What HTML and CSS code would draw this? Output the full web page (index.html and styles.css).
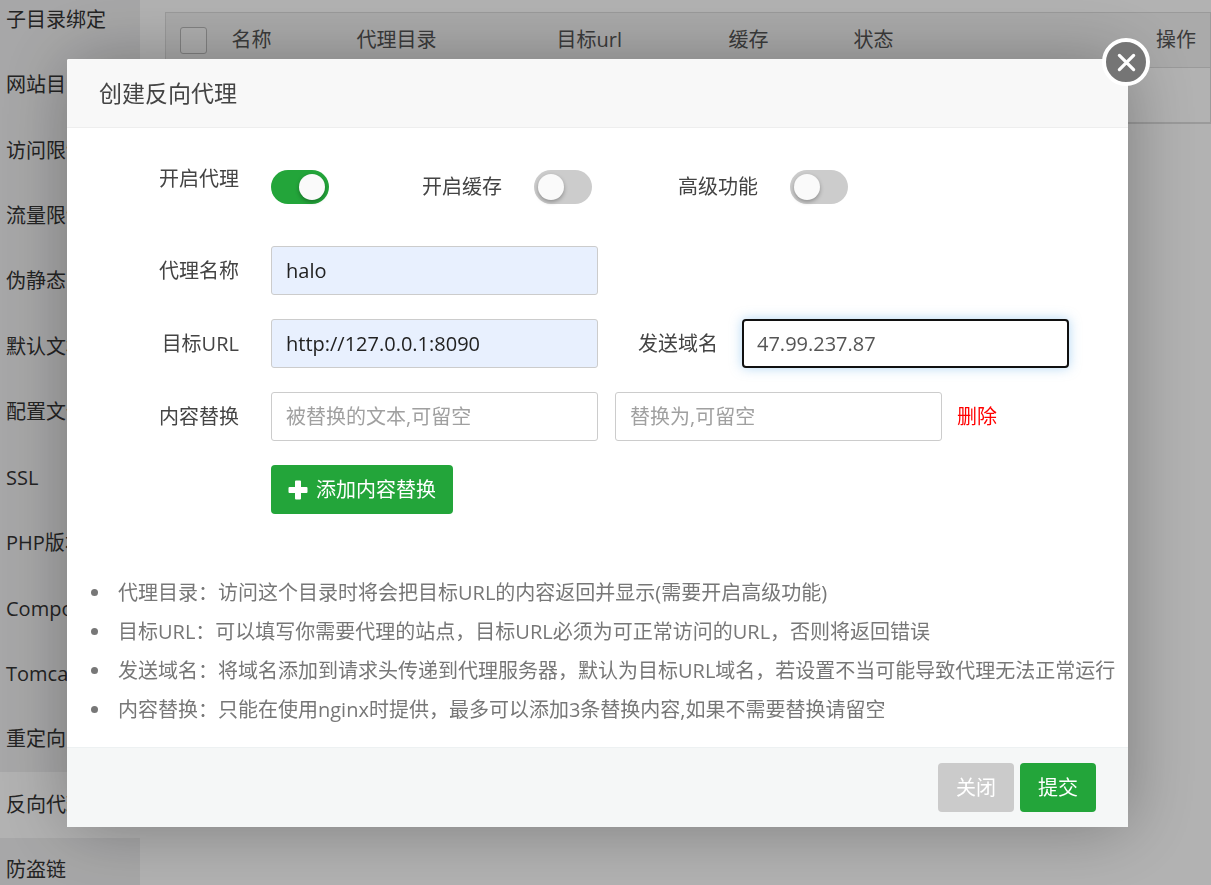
FILE: index.html
```html
<!DOCTYPE html>
<html lang="zh-CN">
<head>
<meta charset="utf-8">
<title>创建反向代理</title>
<link rel="stylesheet" href="styles.css">
</head>
<body>
<div class="page">
  <nav class="sidebar">
    <a class="side-item" href="#">子目录绑定</a>
    <a class="side-item" href="#">网站目录</a>
    <a class="side-item" href="#">访问限制</a>
    <a class="side-item" href="#">流量限制</a>
    <a class="side-item" href="#">伪静态</a>
    <a class="side-item" href="#">默认文档</a>
    <a class="side-item" href="#">配置文件</a>
    <a class="side-item" href="#">SSL</a>
    <a class="side-item" href="#">PHP版本</a>
    <a class="side-item" href="#">Composer</a>
    <a class="side-item" href="#">Tomcat</a>
    <a class="side-item" href="#">重定向</a>
    <a class="side-item active" href="#">反向代理</a>
    <a class="side-item" href="#">防盗链</a>
  </nav>
  <main class="content">
    <table class="proxy-table">
      <thead>
        <tr>
          <th class="col-check"><input class="check" type="checkbox" aria-label="全选"></th>
          <th class="col-name">名称</th>
          <th class="col-dir">代理目录</th>
          <th class="col-url">目标url</th>
          <th class="col-cache">缓存</th>
          <th class="col-state">状态</th>
          <th class="col-action">操作</th>
        </tr>
      </thead>
      <tbody>
        <tr><td colspan="7"></td></tr>
      </tbody>
    </table>
  </main>
</div>

<div class="overlay">
  <section class="modal" role="dialog" aria-labelledby="dialog-title">
    <button class="close" type="button" aria-label="关闭窗口">
      <svg class="close-icon" viewBox="0 0 20 20"><path d="M2.500 2.500 17.500 17.500M17.500 2.500 2.500 17.500" fill="none" stroke="#fff" stroke-width="3.400" stroke-linecap="round"/></svg>
    </button>
    <header class="modal-head"><h1 class="modal-title" id="dialog-title">创建反向代理</h1></header>
    <form class="modal-body">
      <div class="row row-switches">
        <label class="label label-top" for="proxy-on">开启代理</label>
        <input class="switch" id="proxy-on" type="checkbox" checked>
        <div class="switch-group">
          <label for="cache-on">开启缓存</label>
          <input class="switch" id="cache-on" type="checkbox">
        </div>
        <div class="switch-group">
          <label for="advanced-on">高级功能</label>
          <input class="switch" id="advanced-on" type="checkbox">
        </div>
      </div>
      <div class="fields">
        <div class="row">
          <label class="label" for="name">代理名称</label>
          <input class="text filled" id="name" type="text" value="halo">
        </div>
        <div class="row">
          <label class="label" for="url">目标URL</label>
          <input class="text filled" id="url" type="text" value="http://127.0.0.1:8090">
          <label class="label-domain" for="domain">发送域名</label>
          <input class="text focused" id="domain" type="text" value="47.99.237.87">
        </div>
        <div class="row">
          <label class="label" for="from">内容替换</label>
          <input class="text" id="from" type="text" placeholder="被替换的文本,可留空">
          <input class="text text-to" type="text" placeholder="替换为,可留空" aria-label="替换为">
          <a class="remove" href="#">删除</a>
        </div>
        <div class="row row-add">
          <button class="btn btn-green btn-add" type="button">
            <svg class="plus-icon" viewBox="0 0 20 20"><path d="M8 0.500h4q1 0 1 1V7h5.500q1 0 1 1v4q0 1-1 1H13v5.500q0 1-1 1H8q-1 0-1-1V13H1.500q-1 0-1-1V8q0-1 1-1H7V1.500q0-1 1-1z" fill="#fff"/></svg>
            添加内容替换
          </button>
        </div>
      </div>
      <ul class="notes">
        <li class="note">代理目录：访问这个目录时将会把目标URL的内容返回并显示(需要开启高级功能)</li>
        <li class="note">目标URL：可以填写你需要代理的站点，目标URL必须为可正常访问的URL，否则将返回错误</li>
        <li class="note">发送域名：将域名添加到请求头传递到代理服务器，默认为目标URL域名，若设置不当可能导致代理无法正常运行</li>
        <li class="note">内容替换：只能在使用nginx时提供，最多可以添加3条替换内容,如果不需要替换请留空</li>
      </ul>
    </form>
    <footer class="modal-foot">
      <button class="btn btn-grey" type="button">关闭</button>
      <button class="btn btn-green" type="button">提交</button>
    </footer>
  </section>
</div>
</body>
</html>
```

FILE: styles.css
```css
* {
  box-sizing: border-box;
}

body {
  margin: 0;
  height: 100vh;
  overflow: hidden;
  background: #fff;
  color: #444;
  font-family: "Open Sans", "Noto Sans CJK SC", sans-serif;
  font-size: 20px;
  line-height: 28px;
}

input,
button {
  font: inherit;
  margin: 0;
}

.page {
  display: flex;
  height: 100vh;
  overflow: hidden;
}

.sidebar {
  flex: none;
  width: 140px;
  height: calc(100vh + 31px);
  margin-top: -13px;
  display: grid;
  grid-template-rows: repeat(14, 1fr);
  background: #f0f0f1;
}

.side-item {
  display: flex;
  align-items: center;
  padding-left: 6px;
  color: #333;
  text-decoration: none;
  white-space: nowrap;
}

.side-item.active {
  background: #fff;
}

.content {
  flex: 1;
  padding: 12px 0 0 25px;
}

.proxy-table {
  width: 100%;
  table-layout: fixed;
  border-collapse: collapse;
  border: 1px solid #ddd;
  border-bottom: 2px solid #ddd;
}

.proxy-table th {
  height: 55px;
  padding: 0 14px;
  background: #f4f4f4;
  border-bottom: 1px solid #ddd;
  color: #555;
  font-weight: 400;
  text-align: left;
  white-space: nowrap;
}

.proxy-table td {
  height: 55px;
}

.proxy-table .col-action {
  text-align: right;
}

.col-check { width: 52px; }
.col-name { width: 125px; }
.col-dir { width: 200px; }
.col-url { width: 172px; }
.col-cache { width: 125px; }
.col-state { width: 125px; }

.check {
  appearance: none;
  display: block;
  width: 27px;
  height: 27px;
  border: 1px solid #bbb;
  border-radius: 3px;
  background: #fafafa;
}

.overlay {
  position: fixed;
  inset: 0;
  display: flex;
  align-items: flex-start;
  padding: 59px 83px 0 67px;
  background: rgba(0, 0, 0, 0.3);
}

.modal {
  position: relative;
  flex: 1;
  min-width: 0;
  background: #fff;
  border-radius: 2px;
  box-shadow: 1px 1px 70px rgba(0, 0, 0, 0.3);
}

.close {
  position: absolute;
  top: -21px;
  right: -22px;
  width: 48px;
  height: 48px;
  padding: 0;
  display: flex;
  align-items: center;
  justify-content: center;
  border: 4px solid #fff;
  border-radius: 50%;
  background: #757575;
}

.close-icon {
  width: 19px;
  height: 19px;
}

.modal-head {
  padding: 17px 32px;
  background: #f8f8f8;
  border-bottom: 1px solid #eee;
  border-radius: 2px 2px 0 0;
}

.modal-title {
  margin: 0;
  font-size: 23px;
  font-weight: 400;
  line-height: 34px;
}

.modal-body {
  padding: 42px 0 18px;
}

.row {
  display: flex;
  align-items: center;
}

.row-switches {
  margin-bottom: 42px;
}

.fields {
  display: flex;
  flex-direction: column;
  gap: 24px;
}

.label {
  flex: none;
  width: 172px;
  margin-right: 32px;
  text-align: right;
}

.label-top {
  align-self: flex-start;
  line-height: 18px;
}

.switch {
  appearance: none;
  display: block;
  flex: none;
  width: 58px;
  height: 34px;
  padding: 4px;
  border-radius: 17px;
  background: #ccc;
}

.switch::before {
  content: "";
  display: block;
  width: 26px;
  height: 26px;
  border-radius: 50%;
  background: #fafafa;
  box-shadow: 0 2px 4px rgba(0, 0, 0, 0.3);
}

.switch:checked {
  background: #23a53a;
}

.switch:checked::before {
  margin-left: auto;
}

.switch-group {
  display: flex;
  align-items: center;
  gap: 32px;
  margin-left: 86px;
}

.switch + .switch-group {
  margin-left: 93px;
}

.text {
  flex: 0 1 327px;
  min-width: 0;
  height: 49px;
  padding: 0 14px;
  border: 1px solid #ccc;
  border-radius: 3px;
  background: #fff;
  color: #555;
}

.text::placeholder {
  color: #a0a0a0;
  opacity: 1;
}

.text.filled {
  background: #e8f0fe;
  color: #222;
}

.text.focused {
  padding: 0 13px;
  border: 2px solid #101010;
  border-radius: 4px;
  box-shadow: 0 0 12px rgba(102, 175, 233, 0.5);
}

.text-to {
  margin-left: 17px;
}

.label-domain {
  flex: none;
  margin: 0 24px 0 40px;
}

.remove {
  margin-left: 15px;
  color: #f00;
  text-decoration: none;
}

.row-add {
  padding-left: 204px;
}

.btn {
  height: 49px;
  padding: 0 18px;
  border: 0;
  border-radius: 4px;
  color: #fff;
}

.btn-green {
  background: #23a53a;
}

.btn-grey {
  background: #cbcbcb;
}

.btn-add {
  display: flex;
  align-items: center;
  gap: 8px;
  padding: 0 17px;
}

.plus-icon {
  width: 20px;
  height: 20px;
}

.notes {
  margin: 59px 0 0;
  padding: 0 0 0 24px;
  list-style: none;
  color: #777;
}

.note {
  display: flex;
  align-items: center;
  gap: 20px;
  line-height: 39px;
  white-space: nowrap;
}

.note::before {
  content: "";
  flex: none;
  width: 7px;
  height: 7px;
  border-radius: 50%;
  background: #777;
}

.modal-foot {
  display: flex;
  justify-content: flex-end;
  gap: 6px;
  padding: 15px 32px;
  background: #f5f7f7;
  border-top: 1px solid #edf1f2;
}
```
